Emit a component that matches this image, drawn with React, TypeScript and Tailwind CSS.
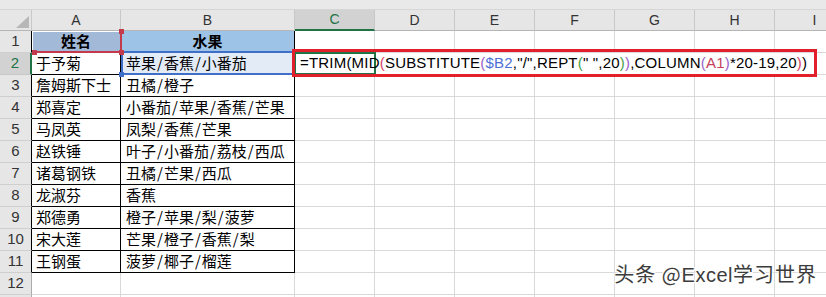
import React from "react";

const names = [
  "于予菊",
  "詹姆斯下士",
  "郑喜定",
  "马凤英",
  "赵铁锤",
  "诸葛钢铁",
  "龙淑芬",
  "郑德勇",
  "宋大莲",
  "王钢蛋",
];

const fruits = [
  "苹果/香蕉/小番茄",
  "丑橘/橙子",
  "小番茄/苹果/香蕉/芒果",
  "凤梨/香蕉/芒果",
  "叶子/小番茄/荔枝/西瓜",
  "丑橘/芒果/西瓜",
  "香蕉",
  "橙子/苹果/梨/菠萝",
  "芒果/橙子/香蕉/梨",
  "菠萝/椰子/榴莲",
];

const rest = ["D", "E", "F", "G", "H", "I"];
const rowNums = Array.from({ length: 13 }, (_, i) => i + 1);

// Formula shown in the edited cell, split into coloured tokens
const formula: { t: string; c: string }[] = [
  { t: "=TRIM(MID", c: "text-black" },
  { t: "(", c: "text-[#d8436a]" },
  { t: "SUBSTITUTE", c: "text-black" },
  { t: "(", c: "text-[#9a62c9]" },
  { t: "$B2", c: "text-[#4d6fd6]" },
  { t: ',"/",REPT', c: "text-black" },
  { t: "(", c: "text-[#49a04a]" },
  { t: '" ",20', c: "text-black" },
  { t: ")", c: "text-[#49a04a]" },
  { t: ")", c: "text-[#9a62c9]" },
  { t: ",COLUMN", c: "text-black" },
  { t: "(", c: "text-[#9a62c9]" },
  { t: "A1", c: "text-[#c4405e]" },
  { t: ")", c: "text-[#9a62c9]" },
  { t: "*20-19,20", c: "text-black" },
  { t: ")", c: "text-[#d8436a]" },
  { t: ")", c: "text-black" },
];

function FruitText({ text }: { text: string }) {
  const parts = text.split("/");
  return (
    <>
      {parts.map((p, i) => (
        <React.Fragment key={i}>
          {i > 0 && <span className="px-[1px]">/</span>}
          {p}
        </React.Fragment>
      ))}
    </>
  );
}

function ColHeader({ label, active }: { label: string; active?: boolean }) {
  return (
    <div
      className={
        active
          ? "h-[21px] flex items-center justify-center border-r border-[#c8c8c8] border-b-2 border-b-[#217346] bg-[#d2d2d2] text-[#217346] text-[14px] font-['Liberation_Sans',sans-serif]"
          : "h-[21px] flex items-center justify-center border-r border-b border-[#c8c8c8] border-b-[#b5b5b5] bg-[#e6e6e6] text-[#333] text-[14px] font-['Liberation_Sans',sans-serif]"
      }
    >
      {label}
    </div>
  );
}

function RowHeader({ n }: { n: number }) {
  if (n === 2) {
    return (
      <div className="h-[22px] flex items-center justify-center bg-[#d2d2d2] border-b border-[#c8c8c8] border-r-2 border-r-[#217346] text-[#217346] text-[15px] font-['Liberation_Sans',sans-serif]">
        {n}
      </div>
    );
  }
  return (
    <div
      className={
        n <= 11
          ? "h-[22px] flex items-center justify-center bg-[#e6e6e6] border-b border-[#cfcfcf] border-r border-r-black text-[#333] text-[15px] font-['Liberation_Sans',sans-serif]"
          : "h-[22px] flex items-center justify-center bg-[#e6e6e6] border-b border-[#cfcfcf] border-r border-r-[#ababab] text-[#333] text-[15px] font-['Liberation_Sans',sans-serif]"
      }
    >
      {n <= 12 ? n : null}
    </div>
  );
}

function Handle({ className }: { className: string }) {
  return <div className={"absolute w-[5px] h-[5px] " + className} />;
}

function SheetRow({ n }: { n: number }) {
  const inTable = n <= 11;
  const tableBorder = "border-r border-b border-black";
  const gridBorder = "border-r border-b border-[#d9d9d9]";

  let aCell: React.ReactNode;
  let bCell: React.ReactNode;

  if (n === 1) {
    aCell = (
      <div className={"relative h-[22px] flex items-center justify-center bg-[#a3b9d8] font-bold text-[15px] text-black " + tableBorder}>
        姓名
        <div className="absolute left-0 top-0 -right-[2px] -bottom-[1px] z-20 border-t border-l border-t-white border-l-white border-r-2 border-b-2 border-r-[#c23a4c] border-b-[#c23a4c]">
          <Handle className="-right-[4px] -top-[3px] bg-[#c23a4c]" />
          <Handle className="-right-[4px] -bottom-[4px] bg-[#c23a4c]" />
          <Handle className="-left-[1px] -bottom-[4px] bg-[#c23a4c]" />
        </div>
      </div>
    );
    bCell = (
      <div className={"h-[22px] flex items-center justify-center bg-[#9dc3e6] font-bold text-[15px] text-black " + tableBorder}>
        水果
      </div>
    );
  } else if (n === 2) {
    aCell = (
      <div className={"h-[22px] flex items-center pl-[4px] text-[15px] text-black " + tableBorder}>
        {names[0]}
      </div>
    );
    bCell = (
      <div className={"relative h-[22px] flex items-center pl-[5px] bg-[#e3ebf6] text-[15px] text-black " + tableBorder}>
        <FruitText text={fruits[0]} />
        <div className="absolute left-0 -top-[2px] right-0 -bottom-[1px] z-10 border-2 border-[#3f6fc6]">
          <Handle className="-left-[4px] -bottom-[4px] bg-[#3f6fc6]" />
        </div>
      </div>
    );
  } else if (inTable) {
    aCell = (
      <div className={"h-[22px] flex items-center pl-[4px] text-[15px] text-black whitespace-nowrap " + tableBorder}>
        {names[n - 2]}
      </div>
    );
    bCell = (
      <div className={"h-[22px] flex items-center pl-[5px] text-[15px] text-black whitespace-nowrap " + tableBorder}>
        <FruitText text={fruits[n - 2]} />
      </div>
    );
  } else {
    aCell = <div className={"h-[22px] " + gridBorder} />;
    bCell = <div className={"h-[22px] " + gridBorder} />;
  }

  let cCell: React.ReactNode;
  if (n === 2) {
    cCell = (
      <div className="relative h-[22px] flex items-center pl-[5px] border-b border-[#d9d9d9]">
        <span className="relative z-10 whitespace-nowrap text-[15px] tracking-[0.2px] font-['Liberation_Sans',sans-serif]">
          {formula.map((f, i) => (
            <span key={i} className={f.c}>
              {f.t}
            </span>
          ))}
        </span>
        <div className="absolute -left-[1px] -top-[1px] right-[-1px] bottom-[-1px] border-2 border-[#217346]" />
        <div className="absolute -left-[3px] -top-[4px] w-[525px] h-[28px] z-30 border-[3px] border-[#e2202c]" />
      </div>
    );
  } else {
    cCell = <div className={"h-[22px] " + gridBorder} />;
  }

  return (
    <>
      <RowHeader n={n} />
      {aCell}
      {bCell}
      {cCell}
      {rest.map((c) => (
        <div
          key={c}
          className={
            n === 2
              ? "h-[22px] border-b border-[#d9d9d9]"
              : "h-[22px] border-r border-b border-[#d9d9d9]"
          }
        />
      ))}
    </>
  );
}

export default function App() {
  return (
    <div className="relative w-[826px] h-[297px] overflow-hidden bg-white font-['Noto_Sans_CJK_SC',sans-serif]">
      <div className="h-[10px] bg-[#e9e9e9] border-b border-[#d6d6d6]" />
      <div className="grid grid-cols-[32px_89px_174px_80px_80px_80px_80px_80px_80px_80px] w-max">
        <div className="h-[21px] flex items-end justify-end pr-[2px] pb-[2px] bg-[#e6e6e6] border-r border-b border-[#c8c8c8] border-b-[#b5b5b5]">
          <svg width="13" height="12" viewBox="0 0 13 12">
            <polygon points="13,0 13,12 0,12" fill="#b7b7b7" />
          </svg>
        </div>
        <ColHeader label="A" />
        <ColHeader label="B" />
        <ColHeader label="C" active />
        {rest.map((c) => (
          <ColHeader key={c} label={c} />
        ))}
        {rowNums.map((n) => (
          <SheetRow key={n} n={n} />
        ))}
      </div>
      <div className="absolute right-[9px] bottom-[12px] z-40 text-[20px] leading-none tracking-[1px] text-[#3c3c3c] [text-shadow:1px_1px_0_#ffffff,-1px_-1px_0_#ffffff,1px_-1px_0_#ffffff,-1px_1px_0_#ffffff]">
        头条 @<span className="font-['Liberation_Sans',sans-serif] tracking-[0.5px]">Excel</span>学习世界
      </div>
    </div>
  );
}
